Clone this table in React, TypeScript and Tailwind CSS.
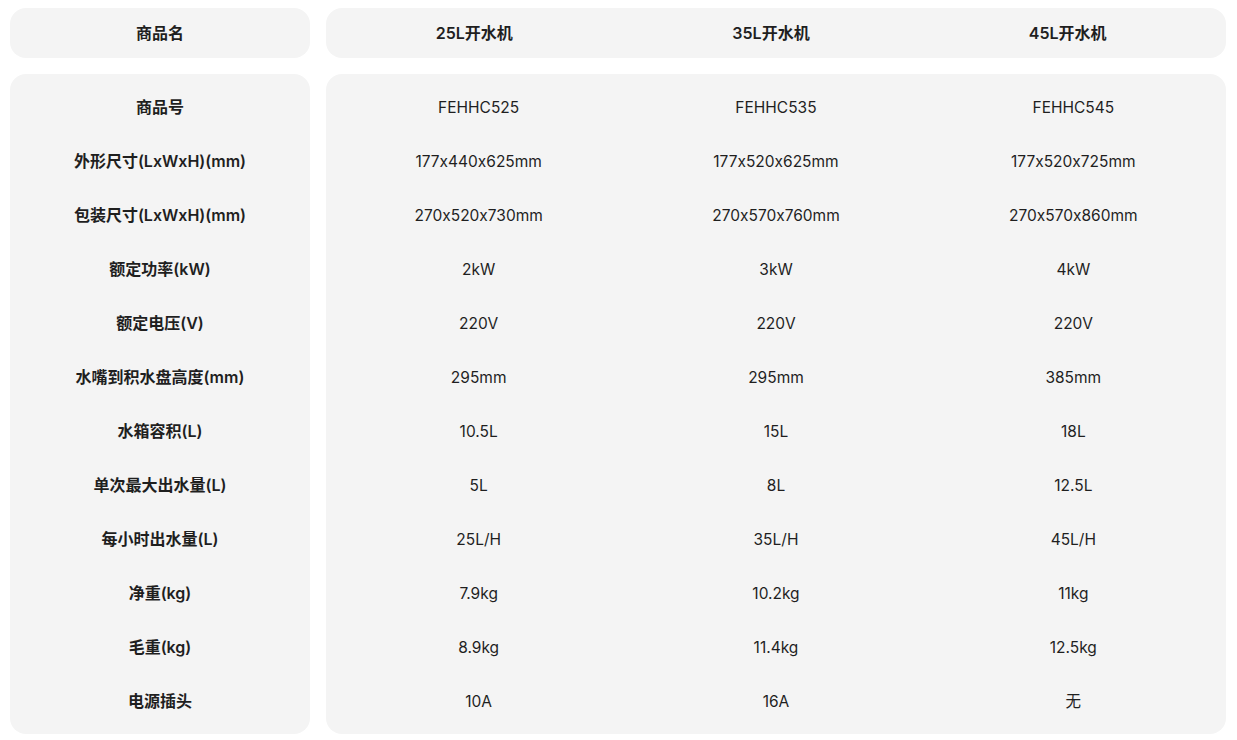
import React from "react";

const labels = [
  "商品号",
  "外形尺寸(LxWxH)(mm)",
  "包装尺寸(LxWxH)(mm)",
  "额定功率(kW)",
  "额定电压(V)",
  "水嘴到积水盘高度(mm)",
  "水箱容积(L)",
  "单次最大出水量(L)",
  "每小时出水量(L)",
  "净重(kg)",
  "毛重(kg)",
  "电源插头",
];

const cols = [
  ["FEHHC525", "177x440x625mm", "270x520x730mm", "2kW", "220V", "295mm", "10.5L", "5L", "25L/H", "7.9kg", "8.9kg", "10A"],
  ["FEHHC535", "177x520x625mm", "270x570x760mm", "3kW", "220V", "295mm", "15L", "8L", "35L/H", "10.2kg", "11.4kg", "16A"],
  ["FEHHC545", "177x520x725mm", "270x570x860mm", "4kW", "220V", "385mm", "18L", "12.5L", "45L/H", "11kg", "12.5kg", "无"],
];

const heads = ["25L开水机", "35L开水机", "45L开水机"];

export default function App() {
  return (
    <div
      className="w-[1237px] h-[740px] bg-white text-[#1f1f1f] text-base [font-feature-settings:'calt'_0]"
      style={{ fontFamily: 'Inter, "Noto Sans CJK SC", sans-serif' }}
    >
      <div className="flex gap-4 pl-[10px] pt-2">
        <div className="w-[300px] flex flex-col gap-4">
          <div className="h-[50px] rounded-2xl bg-[#f4f4f4] flex items-center justify-center font-semibold">
            商品名
          </div>
          <div className="h-[660px] rounded-2xl bg-[#f4f4f4] py-1.5 flex flex-col">
            {labels.map((l) => (
              <div key={l} className="h-[54px] flex items-center justify-center font-semibold">
                {l}
              </div>
            ))}
          </div>
        </div>
        <div className="w-[900px] flex flex-col gap-4">
          <div className="h-[50px] rounded-2xl bg-[#f4f4f4] grid grid-cols-3 pr-[10px]">
            {heads.map((h) => (
              <div key={h} className="flex items-center justify-center font-semibold">
                {h}
              </div>
            ))}
          </div>
          <div className="h-[660px] rounded-2xl bg-[#f4f4f4] py-1.5 px-1 grid grid-cols-3 text-[15.5px]">
            {cols.map((c, i) => (
              <div key={i} className="flex flex-col">
                {c.map((v, j) => (
                  <div key={j} className="h-[54px] pt-px flex items-center justify-center">
                    {v}
                  </div>
                ))}
              </div>
            ))}
          </div>
        </div>
      </div>
    </div>
  );
}
